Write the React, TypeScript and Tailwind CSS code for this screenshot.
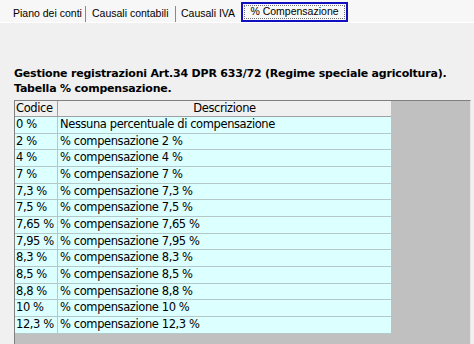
import React from "react";

const rows: [string, string][] = [
  ["0 %", "Nessuna percentuale di compensazione"],
  ["2 %", "% compensazione 2 %"],
  ["4 %", "% compensazione 4 %"],
  ["7 %", "% compensazione 7 %"],
  ["7,3 %", "% compensazione 7,3 %"],
  ["7,5 %", "% compensazione 7,5 %"],
  ["7,65 %", "% compensazione 7,65 %"],
  ["7,95 %", "% compensazione 7,95 %"],
  ["8,3 %", "% compensazione 8,3 %"],
  ["8,5 %", "% compensazione 8,5 %"],
  ["8,8 %", "% compensazione 8,8 %"],
  ["10 %", "% compensazione 10 %"],
  ["12,3 %", "% compensazione 12,3 %"],
];

export default function App() {
  return (
    <div className="w-[474px] h-[344px] bg-[#f0f0f0] overflow-hidden relative text-black" style={{ fontFamily: '"DejaVu Sans", Verdana, sans-serif' }}>
      {/* tab bar */}
      <div className="h-[23px] bg-[#f7f7f7] border-b border-white flex items-end pl-[13px] text-[10.5px] whitespace-nowrap" style={{ fontFamily: '"Liberation Sans", Arial, sans-serif' }}>
        <div className="w-[73px] h-[16px] flex items-center border-r border-[#8a8a8a]">Piano dei conti</div>
        <div className="w-[90px] h-[16px] flex items-center pl-[6px] border-r border-[#8a8a8a]">Causali contabili</div>
        <div className="w-[60px] h-[16px] flex items-center pl-[5px]">Causali IVA</div>
        <div className="ml-[5px] h-[20px] w-[107px] border-2 border-[#1010c0] bg-[#f8f8f8] p-[1px] flex">
          <div className="flex-1 border border-dotted border-[#707070] flex items-center justify-center">% Compensazione</div>
        </div>
      </div>

      {/* title */}
      <div className="pl-[14px] pt-[43px] text-[11px] font-bold leading-[15px] tracking-[-0.2px]">
        <div>Gestione registrazioni Art.34 DPR 633/72 (Regime speciale agricoltura).</div>
        <div>Tabella % compensazione.</div>
      </div>

      {/* grid */}
      <div className="absolute left-[14px] top-[100px] w-[457px] h-[250px] bg-[#c0c0c0] border-l border-t border-[#808080] border-r border-r-[#e6e6e6]">
        <div className="w-[376px] text-[11.5px] tracking-[-0.4px]">
          <div className="flex h-[16px] bg-[#f0f0f0] border-b border-[#a0a0a0] leading-[15px]">
            <div className="w-[43px] border-r border-[#a0a0a0] pl-[1px]">Codice</div>
            <div className="flex-1 text-center">Descrizione</div>
          </div>
          {rows.map(([c, d]) => (
            <div key={c} className="flex h-[16.67px] bg-[#dcffff] border-b border-[#b4c8c8] leading-[15px] whitespace-nowrap overflow-hidden">
              <div className="w-[43px] border-r border-[#b4c8c8] pl-[1px] overflow-visible">{c}</div>
              <div className="flex-1 pl-[2px]">{d}</div>
            </div>
          ))}
        </div>
      </div>
    </div>
  );
}
